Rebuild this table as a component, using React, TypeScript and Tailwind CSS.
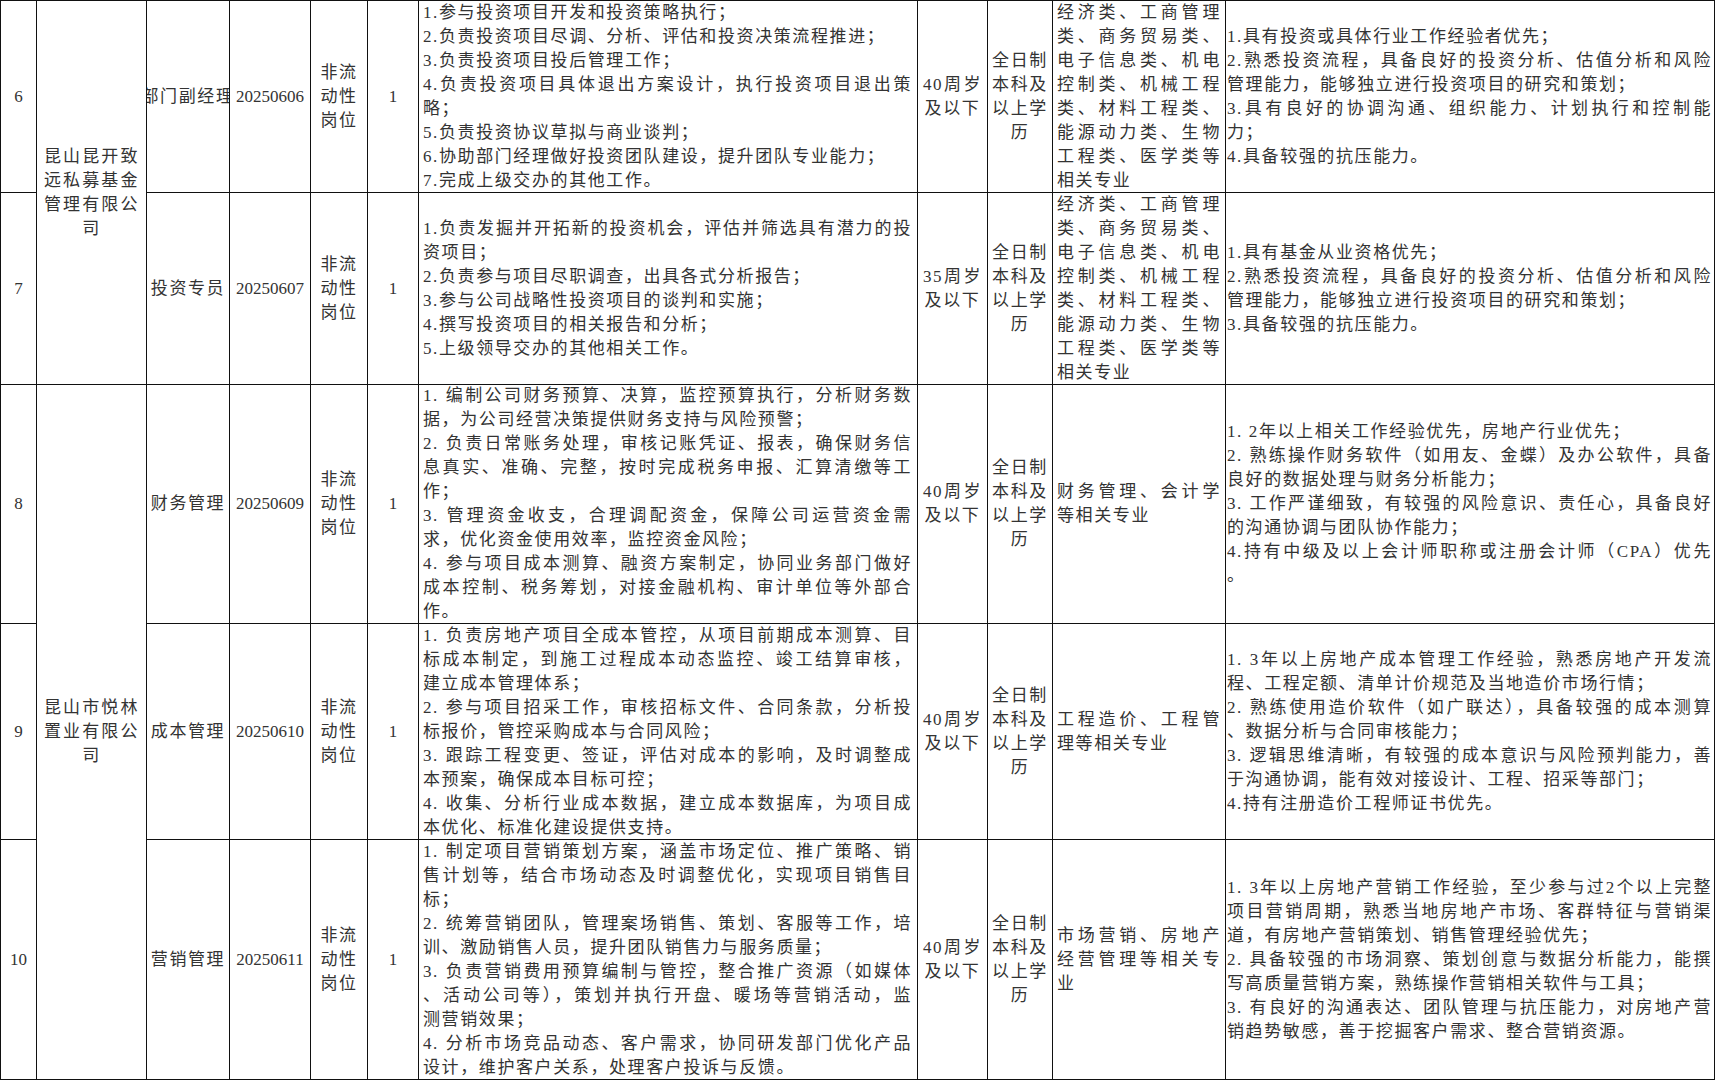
import React from "react";

type A = "j" | "l" | "c";
type Ln = [string, A];

const j = (t: string): Ln => [t, "j"];
const l = (t: string): Ln => [t, "l"];
const c = (t: string): Ln => [t, "c"];

const CELL =
  "bg-white flex flex-col justify-center overflow-hidden text-[#333333] font-['Liberation_Serif','Noto_Sans_CJK_SC',serif] text-[17px] leading-[24px] tracking-[1.6px]";

function Lines({ lines, pad }: { lines: Ln[]; pad: string }) {
  return (
    <div className={`${CELL} ${pad}`}>
      {lines.map(([t, a], i) => (
        <div
          key={i}
          className={
            a === "j"
              ? "text-justify [text-align-last:justify]"
              : a === "c"
              ? "text-center"
              : "text-left"
          }
        >
          {t}
        </div>
      ))}
    </div>
  );
}

function Num({ v }: { v: string }) {
  return (
    <div className={`${CELL} items-center tracking-normal text-[#1f1f1f]`}>
      <span>{v}</span>
    </div>
  );
}

function Pos({ v }: { v: string }) {
  return (
    <div className={`${CELL} items-center whitespace-nowrap`}>
      <span>{v}</span>
    </div>
  );
}

const TYPE: Ln[] = [c("非流"), c("动性"), c("岗位")];
const EDU: Ln[] = [c("全日制"), c("本科及"), c("以上学"), c("历")];
const MAJOR_INV: Ln[] = [
  j("经济类、工商管理"),
  j("类、商务贸易类、"),
  j("电子信息类、机电"),
  j("控制类、机械工程"),
  j("类、材料工程类、"),
  j("能源动力类、生物"),
  j("工程类、医学类等"),
  l("相关专业"),
];

type Row = {
  no: string;
  company?: { lines: Ln[]; span: 2 | 3 };
  pos: string;
  code: string;
  duties: Ln[];
  age: string;
  major: Ln[];
  req: Ln[];
};

const rows: Row[] = [
  {
    no: "6",
    company: {
      span: 2,
      lines: [j("昆山昆开致"), j("远私募基金"), j("管理有限公"), c("司")],
    },
    pos: "部门副经理",
    code: "20250606",
    duties: [
      l("1.参与投资项目开发和投资策略执行；"),
      l("2.负责投资项目尽调、分析、评估和投资决策流程推进；"),
      l("3.负责投资项目投后管理工作；"),
      j("4.负责投资项目具体退出方案设计，执行投资项目退出策"),
      l("略；"),
      l("5.负责投资协议草拟与商业谈判；"),
      l("6.协助部门经理做好投资团队建设，提升团队专业能力；"),
      l("7.完成上级交办的其他工作。"),
    ],
    age: "40",
    major: MAJOR_INV,
    req: [
      l("1.具有投资或具体行业工作经验者优先；"),
      j("2.熟悉投资流程，具备良好的投资分析、估值分析和风险"),
      l("管理能力，能够独立进行投资项目的研究和策划；"),
      j("3.具有良好的协调沟通、组织能力、计划执行和控制能"),
      l("力；"),
      l("4.具备较强的抗压能力。"),
    ],
  },
  {
    no: "7",
    pos: "投资专员",
    code: "20250607",
    duties: [
      j("1.负责发掘并开拓新的投资机会，评估并筛选具有潜力的投"),
      l("资项目；"),
      l("2.负责参与项目尽职调查，出具各式分析报告；"),
      l("3.参与公司战略性投资项目的谈判和实施；"),
      l("4.撰写投资项目的相关报告和分析；"),
      l("5.上级领导交办的其他相关工作。"),
    ],
    age: "35",
    major: MAJOR_INV,
    req: [
      l("1.具有基金从业资格优先；"),
      j("2.熟悉投资流程，具备良好的投资分析、估值分析和风险"),
      l("管理能力，能够独立进行投资项目的研究和策划；"),
      l("3.具备较强的抗压能力。"),
    ],
  },
  {
    no: "8",
    company: {
      span: 3,
      lines: [j("昆山市悦林"), j("置业有限公"), c("司")],
    },
    pos: "财务管理",
    code: "20250609",
    duties: [
      j("1. 编制公司财务预算、决算，监控预算执行，分析财务数"),
      l("据，为公司经营决策提供财务支持与风险预警；"),
      j("2. 负责日常账务处理，审核记账凭证、报表，确保财务信"),
      j("息真实、准确、完整，按时完成税务申报、汇算清缴等工"),
      l("作；"),
      j("3. 管理资金收支，合理调配资金，保障公司运营资金需"),
      l("求，优化资金使用效率，监控资金风险；"),
      j("4. 参与项目成本测算、融资方案制定，协同业务部门做好"),
      j("成本控制、税务筹划，对接金融机构、审计单位等外部合"),
      l("作。"),
    ],
    age: "40",
    major: [j("财务管理、会计学"), l("等相关专业")],
    req: [
      l("1. 2年以上相关工作经验优先，房地产行业优先；"),
      j("2. 熟练操作财务软件（如用友、金蝶）及办公软件，具备"),
      l("良好的数据处理与财务分析能力；"),
      j("3. 工作严谨细致，有较强的风险意识、责任心，具备良好"),
      l("的沟通协调与团队协作能力；"),
      j("4.持有中级及以上会计师职称或注册会计师（CPA）优先"),
      l("。"),
    ],
  },
  {
    no: "9",
    pos: "成本管理",
    code: "20250610",
    duties: [
      j("1. 负责房地产项目全成本管控，从项目前期成本测算、目"),
      j("标成本制定，到施工过程成本动态监控、竣工结算审核，"),
      l("建立成本管理体系；"),
      j("2. 参与项目招采工作，审核招标文件、合同条款，分析投"),
      l("标报价，管控采购成本与合同风险；"),
      j("3. 跟踪工程变更、签证，评估对成本的影响，及时调整成"),
      l("本预案，确保成本目标可控；"),
      j("4. 收集、分析行业成本数据，建立成本数据库，为项目成"),
      l("本优化、标准化建设提供支持。"),
    ],
    age: "40",
    major: [j("工程造价、工程管"), l("理等相关专业")],
    req: [
      j("1. 3年以上房地产成本管理工作经验，熟悉房地产开发流"),
      l("程、工程定额、清单计价规范及当地造价市场行情；"),
      j("2. 熟练使用造价软件（如广联达），具备较强的成本测算"),
      l("、数据分析与合同审核能力；"),
      j("3. 逻辑思维清晰，有较强的成本意识与风险预判能力，善"),
      l("于沟通协调，能有效对接设计、工程、招采等部门；"),
      l("4.持有注册造价工程师证书优先。"),
    ],
  },
  {
    no: "10",
    pos: "营销管理",
    code: "20250611",
    duties: [
      j("1. 制定项目营销策划方案，涵盖市场定位、推广策略、销"),
      j("售计划等，结合市场动态及时调整优化，实现项目销售目"),
      l("标；"),
      j("2. 统筹营销团队，管理案场销售、策划、客服等工作，培"),
      l("训、激励销售人员，提升团队销售力与服务质量；"),
      j("3. 负责营销费用预算编制与管控，整合推广资源（如媒体"),
      j("、活动公司等），策划并执行开盘、暖场等营销活动，监"),
      l("测营销效果；"),
      j("4. 分析市场竞品动态、客户需求，协同研发部门优化产品"),
      l("设计，维护客户关系，处理客户投诉与反馈。"),
    ],
    age: "40",
    major: [j("市场营销、房地产"), j("经营管理等相关专"), l("业")],
    req: [
      j("1. 3年以上房地产营销工作经验，至少参与过2个以上完整"),
      j("项目营销周期，熟悉当地房地产市场、客群特征与营销渠"),
      l("道，有房地产营销策划、销售管理经验优先；"),
      j("2. 具备较强的市场洞察、策划创意与数据分析能力，能撰"),
      l("写高质量营销方案，熟练操作营销相关软件与工具；"),
      j("3. 有良好的沟通表达、团队管理与抗压能力，对房地产营"),
      l("销趋势敏感，善于挖掘客户需求、整合营销资源。"),
    ],
  },
];

export default function App() {
  return (
    <div className="w-[1715px] h-[1080px] bg-white overflow-hidden">
      <div className="grid grid-cols-[35px_109px_82px_80px_56px_50px_498px_69px_64px_172px_488px] grid-rows-[191px_191px_238px_215px_239px] gap-px bg-[#111] p-px w-[1715px] h-[1080px]">
        {rows.map((r) => (
          <React.Fragment key={r.no}>
            <Num v={r.no} />
            {r.company && (
              <div className={r.company.span === 2 ? "row-span-2 grid" : "row-span-3 grid"}>
                <Lines lines={r.company.lines} pad="px-[7px]" />
              </div>
            )}
            <Pos v={r.pos} />
            <Num v={r.code} />
            <Lines lines={TYPE} pad="px-[4px]" />
            <Num v="1" />
            <Lines lines={r.duties} pad="pl-[4px] pr-[5px]" />
            <Lines lines={[j(`${r.age}周岁`), c("及以下")]} pad="px-[5px]" />
            <Lines lines={EDU} pad="px-[4px]" />
            <Lines lines={r.major} pad="px-[4px]" />
            <Lines lines={r.req} pad="pl-[1px] pr-[2px]" />
          </React.Fragment>
        ))}
      </div>
    </div>
  );
}
